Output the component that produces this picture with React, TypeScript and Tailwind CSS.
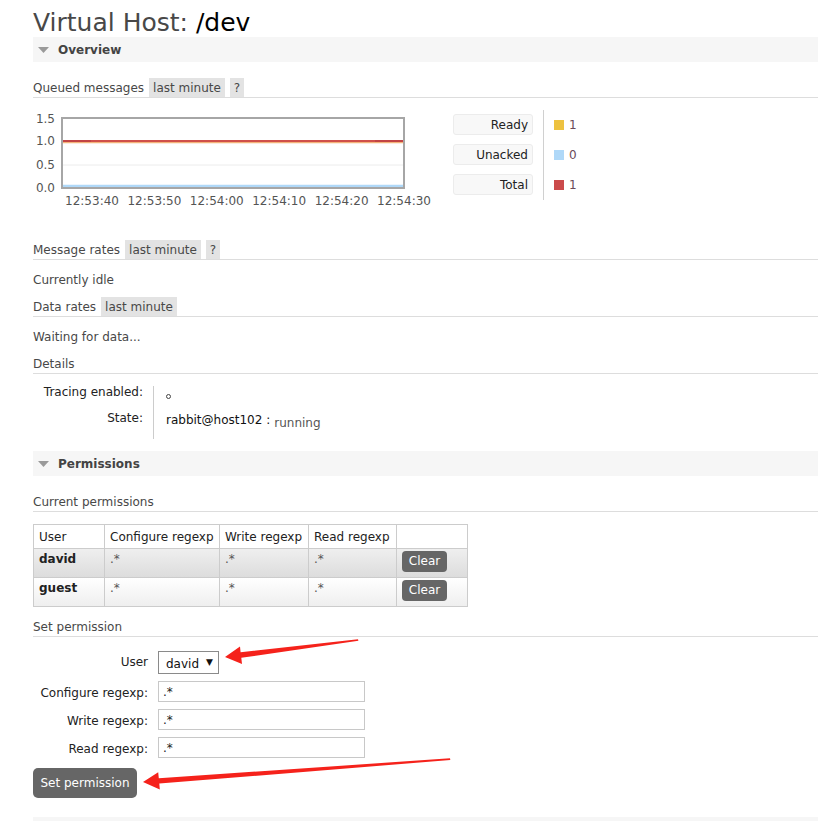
import type { ReactNode } from "react";

const Tag = ({ children }: { children: ReactNode }) => (
  <span className="h-[19px] px-[4px] bg-[#e3e3e3] flex items-center">{children}</span>
);

const SectionBar = ({ title }: { title: string }) => (
  <div className="h-[25px] bg-[#f6f6f6] flex items-center">
    <svg width="11" height="6" viewBox="0 0 11 6" className="ml-[5px]">
      <polygon points="0,0 11,0 5.5,6" fill="#9a9a9a" />
    </svg>
    <span className="ml-[9px] font-bold text-[#444]">{title}</span>
  </div>
);

const SubHeading = ({ children }: { children: ReactNode }) => (
  <div className="h-[20px] border-b border-[#ddd] flex items-end gap-[5px]">{children}</div>
);

const xTicks = ["12:53:40", "12:53:50", "12:54:00", "12:54:10", "12:54:20", "12:54:30"];
const yTicks = [
  { label: "1.5", top: 2 },
  { label: "1.0", top: 24 },
  { label: "0.5", top: 48 },
  { label: "0.0", top: 71 },
];

const legend = [
  { label: "Ready", color: "bg-[#edc240]", value: "1" },
  { label: "Unacked", color: "bg-[#afd8f8]", value: "0" },
  { label: "Total", color: "bg-[#cb4b4b]", value: "1" },
];

const Chart = () => (
  <div className="relative w-[420px] h-[100px] text-[#545454]">
    {yTicks.map((t) => (
      <span key={t.label} className="absolute left-0 w-[22px] text-right leading-[14px]" style={{ top: t.top }}>
        {t.label}
      </span>
    ))}
    <div className="absolute left-[28px] top-[7px] w-[344px] h-[72px] border-2 border-[#a6a6a6]">
      <svg width="340" height="68" className="block">
        <line x1="0" y1="46" x2="340" y2="46" stroke="#ececec" strokeWidth="1" />
        <line x1="0" y1="23.5" x2="340" y2="23.5" stroke="#f3b37a" strokeWidth="1.5" />
        <line x1="0" y1="22" x2="340" y2="22" stroke="#d0504a" strokeWidth="2" />
        <line x1="0" y1="22" x2="28" y2="22" stroke="#c24444" strokeWidth="2" />
        <line x1="312" y1="22" x2="340" y2="22" stroke="#c24444" strokeWidth="2" />
        <line x1="0" y1="67" x2="340" y2="67" stroke="#afd8f8" strokeWidth="2.5" />
      </svg>
    </div>
    {xTicks.map((t, i) => (
      <span
        key={t}
        className="absolute top-[84px] w-[58px] text-center leading-[14px]"
        style={{ left: 30 + i * 62.4 }}
      >
        {t}
      </span>
    ))}
  </div>
);

const Legend = () => (
  <div className="flex h-[90px]">
    <div className="w-[80px] pt-[4px] flex flex-col gap-[9px]">
      {legend.map((l) => (
        <div
          key={l.label}
          className="h-[21px] bg-[#f8f8f8] border border-[#ececec] rounded-[3px] flex items-center justify-end pr-[4px] text-[#222]"
        >
          {l.label}
        </div>
      ))}
    </div>
    <div className="ml-[10px] w-px bg-[#d0d0d0]" />
    <div className="ml-[10px] pt-[4px] flex flex-col gap-[9px]">
      {legend.map((l) => (
        <div key={l.label} className="h-[21px] flex items-center gap-[5px] text-[#6a4a5a]">
          <span className={`w-[10px] h-[10px] ${l.color}`} />
          <span>{l.value}</span>
        </div>
      ))}
    </div>
  </div>
);

const perms = [
  { user: "david", bg: "bg-linear-to-b from-[#efefef] to-[#dcdcdc]" },
  { user: "guest", bg: "bg-linear-to-b from-[#ffffff] to-[#eeeeee]" },
];

const Button = ({ children, className }: { children: ReactNode; className: string }) => (
  <button className={`bg-[#666] text-white ${className}`}>{children}</button>
);

const FormRow = ({ label, children }: { label: string; children: ReactNode }) => (
  <div className="flex items-center">
    <span className="w-[115px] text-right text-[#222] pt-[3px]">{label}</span>
    <div className="ml-[10px]">{children}</div>
  </div>
);

const RegexInput = () => (
  <input
    readOnly
    value=".*"
    className="block w-[207px] h-[21px] border border-[#c8c8c8] px-[4px] text-[12px] text-[#222] outline-none"
  />
);

const Arrows = () => (
  <svg className="absolute left-0 top-0 pointer-events-none" width="818" height="821">
    <polygon
      points="225,657 240,646.5 240.6,652.3 358,639.3 358.4,640.8 241.3,657.8 242,664"
      fill="#f5221b"
    />
    <polygon
      points="143,782 158.2,772.3 158.8,778.2 450,758.3 450.3,760 159.3,783.6 159.8,789.5"
      fill="#f5221b"
    />
  </svg>
);

const App = () => (
  <div className="relative w-[818px] h-[821px] overflow-hidden bg-white pl-[33px] font-['DejaVu_Sans',Verdana,sans-serif] text-[12px] text-[#484848]">
    <h1 className="pt-[9px] leading-[28px] text-[25px] font-normal text-[#484848]">
      Virtual Host: <span className="text-black">/dev</span>
    </h1>
    <SectionBar title="Overview" />

    <div className="mt-[16px]">
      <SubHeading>
        <span className="self-center">Queued messages</span>
        <Tag>last minute</Tag>
        <Tag>?</Tag>
      </SubHeading>
    </div>
    <div className="mt-[12px] flex">
      <Chart />
      <Legend />
    </div>

    <div className="mt-[30px]">
      <SubHeading>
        <span className="self-center">Message rates</span>
        <Tag>last minute</Tag>
        <Tag>?</Tag>
      </SubHeading>
    </div>
    <div className="mt-[10px] leading-[20px]">Currently idle</div>
    <div className="mt-[7px]">
      <SubHeading>
        <span className="self-center">Data rates</span>
        <Tag>last minute</Tag>
      </SubHeading>
    </div>
    <div className="mt-[10px] leading-[20px]">Waiting for data...</div>
    <div className="mt-[7px]">
      <SubHeading>
        <span className="self-center">Details</span>
      </SubHeading>
    </div>

    <div className="mt-[5px] flex">
      <div className="w-[110px] text-right text-[#222] leading-[26px]">
        <div>Tracing enabled:</div>
        <div>State:</div>
      </div>
      <div className="ml-[10px] mt-[7px] h-[53px] border-l border-[#ccc] pl-[12px]">
        <span className="block mt-[8px] w-[5px] h-[5px] rounded-full border border-[#444]" />
        <div className="mt-[13px] flex items-start">
          <span className="text-[#111] leading-[16px]">rabbit@host102 :</span>
          <span className="ml-[4px] mt-[3px] text-[#555] leading-[16px]">running</span>
        </div>
      </div>
    </div>

    <div className="mt-[12px]">
      <SectionBar title="Permissions" />
    </div>
    <div className="mt-[16px]">
      <SubHeading>
        <span className="self-center">Current permissions</span>
      </SubHeading>
    </div>

    <table className="mt-[12px] w-[434px] table-fixed border-collapse text-[#222]">
      <colgroup>
        <col className="w-[71px]" />
        <col className="w-[115px]" />
        <col className="w-[89px]" />
        <col className="w-[88px]" />
        <col className="w-[71px]" />
      </colgroup>
      <thead>
        <tr className="h-[24px]">
          {["User", "Configure regexp", "Write regexp", "Read regexp", ""].map((h, i) => (
            <th key={i} className="border border-[#ccc] px-[5px] text-left font-normal leading-[16px] whitespace-nowrap">
              {h}
            </th>
          ))}
        </tr>
      </thead>
      <tbody>
        {perms.map((p) => (
          <tr key={p.user} className={`h-[29px] ${p.bg}`}>
            <td className="border border-[#ccc] px-[5px] pt-[2px] align-top font-bold leading-[16px]">{p.user}</td>
            <td className="border border-[#ccc] px-[5px] pt-[2px] align-top leading-[16px] text-[#555]">.*</td>
            <td className="border border-[#ccc] px-[5px] pt-[2px] align-top leading-[16px] text-[#555]">.*</td>
            <td className="border border-[#ccc] px-[5px] pt-[2px] align-top leading-[16px] text-[#555]">.*</td>
            <td className="border border-[#ccc] px-[5px] pt-[2px] align-top">
              <Button className="h-[21px] w-[45px] rounded-[4px] leading-[21px]">Clear</Button>
            </td>
          </tr>
        ))}
      </tbody>
    </table>

    <div className="mt-[10px]">
      <SubHeading>
        <span className="self-center">Set permission</span>
      </SubHeading>
    </div>

    <div className="mt-[14px] flex flex-col gap-[7px]">
      <div className="flex items-start">
        <span className="w-[115px] text-right text-[#222] pt-[2px]">User</span>
        <div className="ml-[10px] w-[61px] h-[23px] border border-[#8a8a8a] flex items-center pl-[7px] text-[#111]">
          <span className="pt-[2px]">david</span>
          <span className="ml-[7px] text-[9px]">▼</span>
        </div>
      </div>
      <FormRow label="Configure regexp:">
        <RegexInput />
      </FormRow>
      <FormRow label="Write regexp:">
        <RegexInput />
      </FormRow>
      <FormRow label="Read regexp:">
        <RegexInput />
      </FormRow>
    </div>

    <Button className="mt-[10px] h-[30px] w-[104px] rounded-[5px] text-[12px]">Set permission</Button>

    <div className="mt-[19px] h-[25px] bg-[#f6f6f6]" />

    <Arrows />
  </div>
);

export default App;
